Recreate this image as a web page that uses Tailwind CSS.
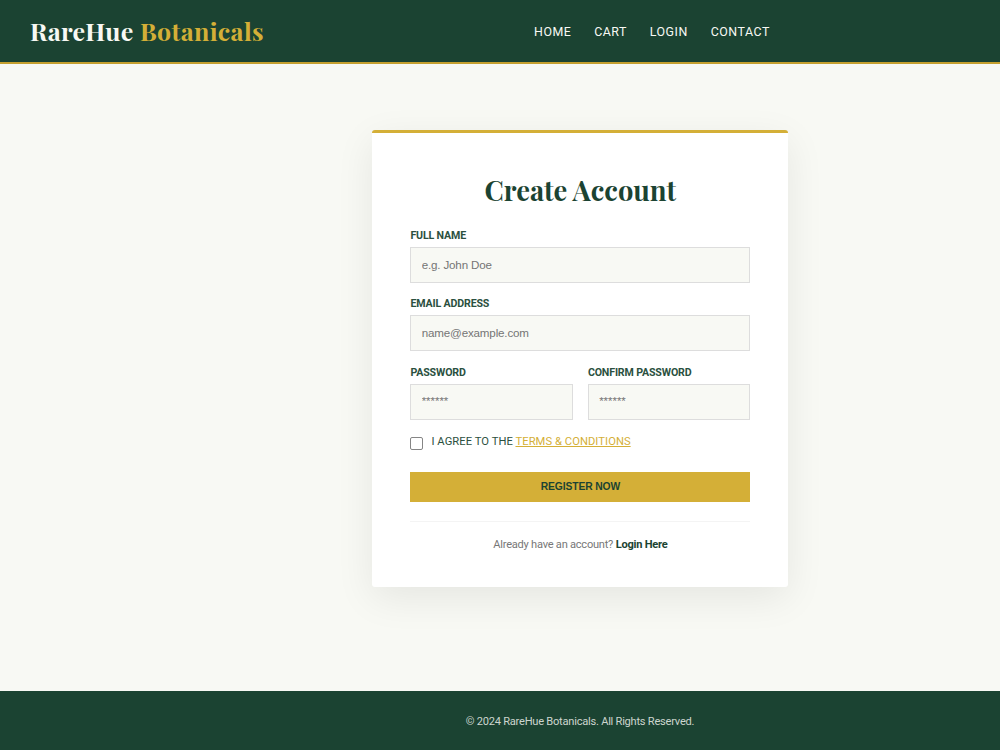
<!DOCTYPE html>
<html lang="en">
<head>
<meta charset="utf-8">
<title>RareHue Botanicals - Create Account</title>
<script src="https://cdn.jsdelivr.net/npm/@tailwindcss/browser@4"></script>
</head>
<body class="bg-[#f8f9f4] font-['Roboto',sans-serif]">
<div class="flex h-[750px] w-full flex-col overflow-hidden">
  <header class="flex h-16 shrink-0 items-center border-b-2 border-[#c5a02f] bg-[#1b4332] pl-[30px]">
    <a class="w-[504px] whitespace-nowrap font-['Playfair_Display','Liberation_Serif',serif] text-[25px] leading-8 font-bold tracking-[0.34px] text-[#f8f9f4]">RareHue <span class="text-[#d4af37]">Botanicals</span></a>
    <nav class="flex gap-[22.7px] pt-px text-[12.4px] leading-4 tracking-[0.55px] text-[#f8f9f4]">
      <a>HOME</a><a>CART</a><a>LOGIN</a><a>CONTACT</a>
    </nav>
  </header>
  <main class="flex-1 pt-[66px] pl-[372.4px]">
    <section class="h-[457.3px] w-[416px] rounded-[3px] border-t-[3px] border-[#d4af37] bg-white px-[38px] pt-[38px] shadow-[0_11px_38px_rgba(0,0,0,0.08)]">
      <h1 class="text-center font-['Playfair_Display','Liberation_Serif',serif] text-[27.3px] leading-[38px] font-bold whitespace-nowrap text-[#1b4332]">Create Account</h1>
      <form class="mt-5 text-[#2b5040]">
        <label class="block h-[18px] pt-px text-[10.64px] leading-3 font-bold tracking-[-0.15px]">FULL NAME</label>
        <input class="block h-9 w-full border border-[#dddddd] bg-[#f8f9f4] px-[10.3px] pb-[2px] font-['Liberation_Sans',sans-serif] text-[11.6px] tracking-[-0.16px] placeholder:text-[#757575]" placeholder="e.g. John Doe">
        <label class="mt-[14px] block h-[18px] pt-px text-[10.64px] leading-3 font-bold tracking-[-0.15px]">EMAIL ADDRESS</label>
        <input class="block h-9 w-full border border-[#dddddd] bg-[#f8f9f4] px-[10.3px] pb-[2px] font-['Liberation_Sans',sans-serif] text-[11.6px] tracking-[-0.16px] placeholder:text-[#757575]" placeholder="name@example.com">
        <div class="mt-[14px] flex gap-[15px]">
          <div class="flex-1">
            <label class="block h-[19px] pt-[2px] text-[10.64px] leading-3 font-bold tracking-[-0.15px] whitespace-nowrap">PASSWORD</label>
            <input type="password" class="block h-9 w-full border border-[#dddddd] bg-[#f8f9f4] px-[10.3px] pb-[3px] font-['Liberation_Sans',sans-serif] text-[11.4px] placeholder:text-[#757575]" placeholder="******">
          </div>
          <div class="flex-1">
            <label class="block h-[19px] pt-[2px] text-[10.64px] leading-3 font-bold tracking-[-0.15px] whitespace-nowrap">CONFIRM PASSWORD</label>
            <input type="password" class="block h-9 w-full border border-[#dddddd] bg-[#f8f9f4] px-[10.3px] pb-[3px] font-['Liberation_Sans',sans-serif] text-[11.4px] placeholder:text-[#757575]" placeholder="******">
          </div>
        </div>
        <div class="mt-[13px] flex h-[19px] gap-2">
          <input type="checkbox" class="mt-[4px] block h-[13px] w-[13px] appearance-none rounded-[2px] border border-[#858585] bg-white">
          <label class="pt-px text-[11.2px] leading-4 tracking-[0.06px] whitespace-nowrap">I AGREE TO THE <a class="text-[#d4af37] underline">TERMS &amp; CONDITIONS</a></label>
        </div>
        <button type="button" class="mt-[20px] block h-[30px] w-full bg-[#d4af37] font-['Liberation_Sans',sans-serif] text-[10.3px] font-bold tracking-[-0.12px] text-[#1b4332]">REGISTER NOW</button>
      </form>
      <p class="mt-[19px] border-t border-[#f4f4f4] pt-[15px] text-center text-[11.1px] leading-4 tracking-[-0.25px] text-[#777777]">Already have an account? <a class="font-bold text-[#1b4332]">Login Here</a></p>
    </section>
  </main>
  <footer class="flex h-[59px] shrink-0 justify-center bg-[#1b4332] pt-[23px] pl-[160px] text-[11.1px] leading-4 tracking-[-0.24px] text-[#ccd5ce]">© 2024 RareHue Botanicals. All Rights Reserved.</footer>
</div>
</body>
</html>
